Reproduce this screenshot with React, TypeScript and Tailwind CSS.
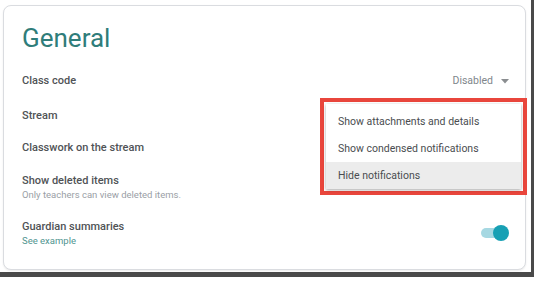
export default function App() {
  const font = { fontFamily: "Roboto, 'Liberation Sans', sans-serif" };
  return (
    <div className="w-[540px] h-[283px] bg-white" style={font}>
      <div className="w-[534px] h-[277px] border-r-[3px] border-b-[5px] border-[#4a4a4a] pl-[3px] pt-[5px] pr-[5px] pb-[2px]">
        <div className="relative h-full rounded-[8px] border border-[#dadce0] bg-white pl-[18px] pr-[16px] pt-[14px] shadow-[0_1px_2px_rgba(0,0,0,0.08)]">
          <h1 className="text-[26px] leading-[36px] text-[#2f7d7a]">General</h1>

          <div className="mt-[17px] flex items-center justify-between h-[16px]">
            <span className="text-[11px] font-medium text-[#505356]">Class code</span>
            <span className="flex items-center gap-[8px] text-[10.5px] text-[#80868b]">
              Disabled
              <svg width="8" height="5" viewBox="0 0 8 5">
                <path d="M0 0h8L4 4.5z" fill="#8a8d90" />
              </svg>
            </span>
          </div>

          <div className="mt-[19px] h-[16px] flex items-center">
            <span className="text-[11px] font-medium text-[#505356]">Stream</span>
          </div>

          <div className="mt-[16px] h-[16px] flex items-center">
            <span className="text-[11px] font-medium text-[#505356]">Classwork on the stream</span>
          </div>

          <div className="mt-[17px] flex flex-col">
            <span className="text-[11px] leading-[16px] font-medium text-[#505356]">Show deleted items</span>
            <span className="text-[9.5px] leading-[12px] text-[#9aa0a6]">Only teachers can view deleted items.</span>
          </div>

          <div className="mt-[18px] flex items-center justify-between">
            <div className="flex flex-col">
              <span className="text-[11px] leading-[16px] font-medium text-[#505356]">Guardian summaries</span>
              <span className="text-[9.5px] leading-[12px] text-[#4f9590]">See example</span>
            </div>
            <div className="relative mr-[0px] h-[16px] w-[28px]">
              <div className="absolute left-0 top-[3px] h-[10px] w-[24px] rounded-full bg-[#a6d8e2]" />
              <div className="absolute right-0 top-0 h-[16px] w-[16px] rounded-full bg-[#17a0b4]" />
            </div>
          </div>

          <div className="absolute right-[15px] top-[176px] h-[10px] w-[24px] rounded-full bg-[#17a0b4]" />

          <div className="absolute left-[316px] top-[92px] w-[207px] border-[4px] border-[#e9463c] bg-white">
            <div className="mx-[2px] my-[2px] bg-white shadow-[0_1px_3px_rgba(0,0,0,0.35)] pt-[4px]">
              <div className="h-[27px] flex items-center pl-[12px] text-[10.5px] text-[#4a4d50]">Show attachments and details</div>
              <div className="h-[27px] flex items-center pl-[12px] text-[10.5px] text-[#4a4d50]">Show condensed notifications</div>
              <div className="h-[27px] flex items-center pl-[12px] text-[10.5px] text-[#4a4d50] bg-[#ececec]">Hide notifications</div>
            </div>
          </div>
        </div>
      </div>
    </div>
  );
}
